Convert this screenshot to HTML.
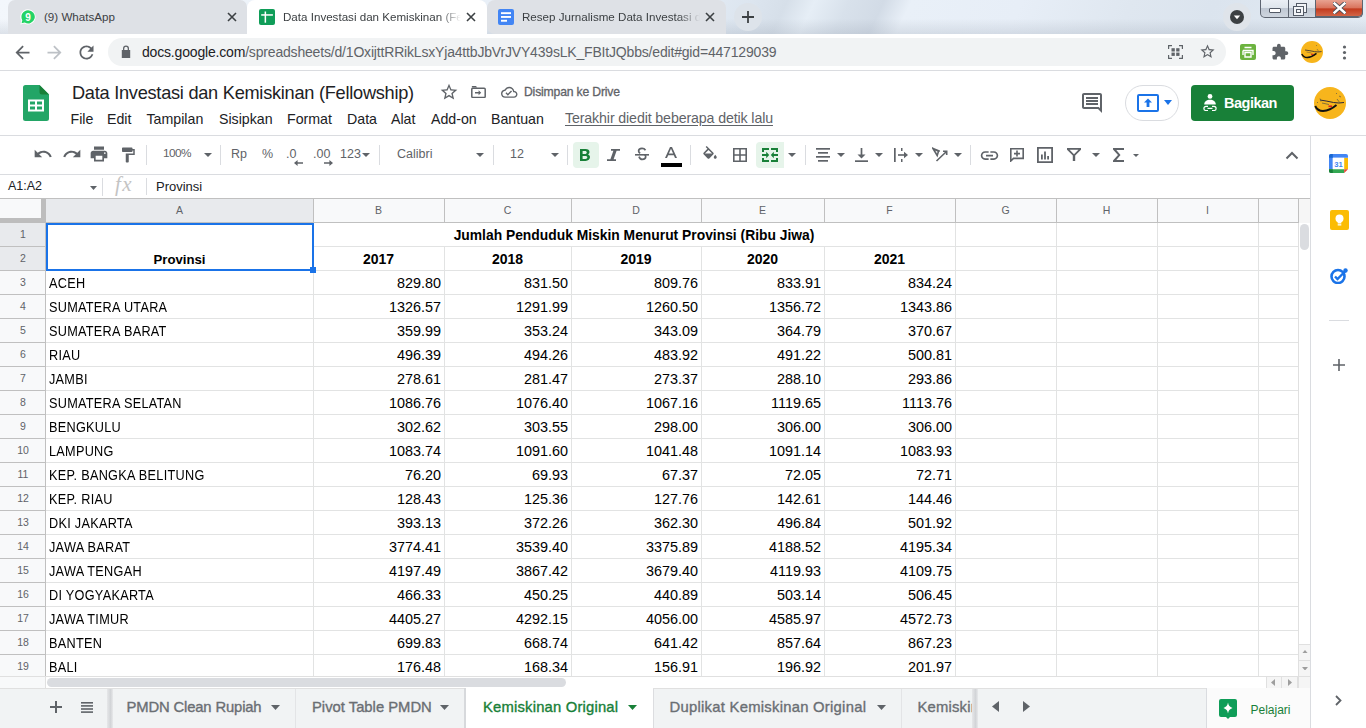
<!DOCTYPE html><html><head><meta charset="utf-8"><style>html,body{margin:0;padding:0;}body{width:1366px;height:728px;overflow:hidden;position:relative;background:#fff;font-family:"Liberation Sans",sans-serif;}div,svg{box-sizing:border-box;}</style></head><body>
<div style="position:absolute;left:0px;top:0px;width:1366px;height:34px;background:linear-gradient(180deg,rgba(255,255,255,0) 55%,rgba(140,150,165,0.22) 100%),linear-gradient(115deg,#f3f7fc 0%,#e4ecf5 50%,#dce5ef 54.5%,#d6dfe9 57%,#e6eef6 59%,#d8e1eb 61.5%,#d2dbe6 64%,#e9f0f8 66%,#e7eef7 74%,#dfe7f0 82%,#dbe4ee 88%,#e3ebf4 100%);"></div>
<div style="position:absolute;left:8px;top:0px;width:239px;height:34px;background:#dee1e6;border-radius:7px 7px 0 0;"></div>
<div style="position:absolute;left:247px;top:0px;width:240px;height:34px;background:#fff;border-radius:8px 8px 0 0;"></div>
<div style="position:absolute;left:487px;top:0px;width:239px;height:34px;background:#dee1e6;border-radius:8px 8px 0 8px;"></div>
<svg style="position:absolute;left:20px;top:9px;" width="16" height="16" viewBox="0 0 16 16"><path fill="#fff" d="M8 0.3a7.6 7.6 0 0 0-6.6 11.4L0.4 15.6l4-1A7.6 7.6 0 1 0 8 0.3z"/><path fill="#25d366" d="M8 1.3a6.6 6.6 0 0 0-5.7 9.9L1.6 14.3l3.1-.8A6.6 6.6 0 1 0 8 1.3z"/><text x="8" y="11.6" font-family="Liberation Sans" font-weight="bold" font-size="10" fill="#fff" text-anchor="middle">9</text></svg>
<div style="position:absolute;left:44px;top:11.18px;font-size:11.6px;line-height:11.6px;color:#3c4043;font-weight:normal;white-space:nowrap;">(9) WhatsApp</div>
<svg style="position:absolute;left:226px;top:11px;" width="12" height="12" viewBox="0 0 12 12"><path stroke="#3c4043" stroke-width="1.6" d="M2 2L10 10M10 2L2 10"/></svg>
<svg style="position:absolute;left:259px;top:9px;" width="16" height="16" viewBox="0 0 16 16"><rect x="0" y="0" width="16" height="16" rx="2" fill="#0f9d58"/><rect x="2.2" y="5.2" width="11.7" height="1.5" fill="#fff"/><rect x="5.6" y="2.5" width="1.5" height="11.2" fill="#fff"/></svg>
<div style="position:absolute;left:283px;top:11.18px;font-size:11.6px;line-height:11.6px;color:#3c4043;font-weight:normal;white-space:nowrap;width:178px;overflow:hidden;-webkit-mask-image:linear-gradient(90deg,#000 0,#000 156px,transparent 178px);">Data Investasi dan Kemiskinan (Fellowship)</div>
<svg style="position:absolute;left:465px;top:11px;" width="12" height="12" viewBox="0 0 12 12"><path stroke="#3c4043" stroke-width="1.6" d="M2 2L10 10M10 2L2 10"/></svg>
<svg style="position:absolute;left:498px;top:9px;" width="16" height="16" viewBox="0 0 16 16"><rect x="0" y="0" width="16" height="16" rx="2" fill="#4285f4"/><rect x="3" y="3.2" width="10" height="1.9" fill="#fff"/><rect x="3" y="7" width="10" height="1.9" fill="#fff"/><rect x="3" y="10.8" width="6" height="1.9" fill="#fff"/></svg>
<div style="position:absolute;left:522px;top:11.18px;font-size:11.6px;line-height:11.6px;color:#3c4043;font-weight:normal;white-space:nowrap;width:178px;overflow:hidden;-webkit-mask-image:linear-gradient(90deg,#000 0,#000 156px,transparent 178px);">Resep Jurnalisme Data Investasi dan Kemiskinan</div>
<svg style="position:absolute;left:704px;top:11px;" width="12" height="12" viewBox="0 0 12 12"><path stroke="#3c4043" stroke-width="1.6" d="M2 2L10 10M10 2L2 10"/></svg>
<div style="position:absolute;left:734px;top:3px;width:28px;height:28px;background:#dde3ea;border-radius:50%;"></div>
<svg style="position:absolute;left:741px;top:10px;" width="14" height="14" viewBox="0 0 14 14"><path stroke="#3c4043" stroke-width="1.8" d="M7 1V13M1 7H13"/></svg>
<div style="position:absolute;left:1223px;top:3px;width:28px;height:28px;background:#dfe4ea;border-radius:50%;"></div>
<svg style="position:absolute;left:1230px;top:10px;" width="14" height="14" viewBox="0 0 14 14"><circle cx="7" cy="7" r="7" fill="#3c4043"/><path fill="#fff" d="M3.8 5.6h6.4L7 9.2z"/></svg>
<div style="position:absolute;left:1260px;top:-2px;width:103px;height:20px;border:1px solid #5d6470;border-top:none;border-radius:0 0 5px 5px;background:linear-gradient(#eef2f7 0%,#dfe5ec 50%,#bfc7d2 55%,#cfd6df 100%);overflow:hidden;"></div>
<div style="position:absolute;left:1288px;top:0px;width:1px;height:17px;background:#5d6470;"></div>
<div style="position:absolute;left:1315px;top:0px;width:48px;height:17px;background:linear-gradient(#e8a291 0%,#d9735c 50%,#c23a1e 55%,#d26547 100%);border-radius:0 0 5px 0;border-left:1px solid #5d6470;border-bottom:1px solid #5d6470;border-right:1px solid #5d6470;"></div>
<div style="position:absolute;left:1269px;top:8px;width:12px;height:5px;background:#fff;border:1px solid #535a66;border-radius:1px;"></div>
<div style="position:absolute;left:1296px;top:3px;width:11px;height:10px;border:1px solid #535a66;background:#f3f5f8;"></div>
<div style="position:absolute;left:1293px;top:6px;width:11px;height:10px;border:1px solid #535a66;background:#f3f5f8;"></div>
<div style="position:absolute;left:1296px;top:9px;width:5px;height:4px;border:1px solid #535a66;"></div>
<svg style="position:absolute;left:1333px;top:2px;" width="13" height="12" viewBox="0 0 13 12"><path d="M1.5 1.5L11.5 10.5M11.5 1.5L1.5 10.5" stroke="#4a4f58" stroke-width="4.2" stroke-linecap="square"/><path d="M1.5 1.5L11.5 10.5M11.5 1.5L1.5 10.5" stroke="#fff" stroke-width="2.4" stroke-linecap="square"/></svg>
<div style="position:absolute;left:0px;top:34px;width:1366px;height:36px;background:#fff;"></div>
<svg style="position:absolute;left:11.5px;top:41.5px;" width="21" height="21" viewBox="0 0 24 24"><path fill="#5f6368" d="M20 11H7.83l5.59-5.59L12 4l-8 8 8 8 1.41-1.41L7.83 13H20v-2z"/></svg>
<svg style="position:absolute;left:43.5px;top:41.5px;" width="21" height="21" viewBox="0 0 24 24"><path fill="#bdc1c6" d="M12 4l-1.41 1.41L16.17 11H4v2h12.17l-5.58 5.59L12 20l8-8z"/></svg>
<svg style="position:absolute;left:75.5px;top:41.5px;" width="21" height="21" viewBox="0 0 24 24"><path fill="#5f6368" d="M17.65 6.35C16.2 4.9 14.21 4 12 4c-4.42 0-7.99 3.58-7.99 8s3.57 8 7.99 8c3.73 0 6.84-2.55 7.73-6h-2.08c-.82 2.33-3.04 4-5.65 4-3.31 0-6-2.69-6-6s2.69-6 6-6c1.66 0 3.14.69 4.22 1.78L13 11h7V4l-2.35 2.35z"/></svg>
<div style="position:absolute;left:108px;top:38px;width:1118px;height:28px;background:#f1f3f4;border-radius:14px;"></div>
<svg style="position:absolute;left:121px;top:45px;" width="10" height="13" viewBox="0 0 10 13"><path fill="#5f6368" d="M2 5V3.5a3 3 0 0 1 6 0V5h1.2v8H0.8V5zM3.3 5h3.4V3.5a1.7 1.7 0 0 0-3.4 0z"/></svg>
<div style="position:absolute;left:142px;top:45.15px;font-size:14px;line-height:14px;color:#202124;font-weight:normal;white-space:nowrap;"><span style="letter-spacing:-0.18px">docs.google.com<span style="color:#5f6368">/spreadsheets/d/1OxijttRRikLsxYja4ttbJbVrJVY439sLK_FBItJQbbs/edit#gid=447129039</span></span></div>
<svg style="position:absolute;left:1168px;top:45px;" width="15" height="14" viewBox="0 0 15 14"><g fill="none" stroke="#5f6368" stroke-width="1.2"><path d="M0.6 4V0.6H4M11 0.6H14.4V4M14.4 10V13.4H11M4 13.4H0.6V10"/></g><g fill="#5f6368"><rect x="3.5" y="3.2" width="3.3" height="3.3"/><rect x="8.2" y="3.2" width="3.3" height="3.3"/><rect x="3.5" y="7.6" width="3.3" height="3.3"/><rect x="8.2" y="7.6" width="3.3" height="3.3"/></g></svg>
<svg style="position:absolute;left:1199px;top:43px;" width="17" height="17" viewBox="0 0 24 24"><path fill="#5f6368" d="M22 9.24l-7.19-.62L12 2 9.19 8.63 2 9.24l5.46 4.73L5.82 21 12 17.27 18.18 21l-1.63-7.03L22 9.24zM12 15.4l-3.76 2.27 1-4.28-3.32-2.88 4.38-.38L12 6.1l1.71 4.04 4.38.38-3.32 2.88 1 4.28L12 15.4z"/></svg>
<svg style="position:absolute;left:1240px;top:44px;" width="16" height="16" viewBox="0 0 16 16"><rect width="16" height="16" rx="2" fill="#6cb33f"/><path fill="none" stroke="#fff" stroke-width="1.4" d="M4.5 3.5h7M3 6.5h10v4.5M3 6.5v4.5M5 8.5h6v4.5H5z"/></svg>
<svg style="position:absolute;left:1271px;top:43px;" width="18" height="18" viewBox="0 0 24 24"><path fill="#5f6368" d="M20.5 11H19V7c0-1.1-.9-2-2-2h-4V3.5C13 2.12 11.88 1 10.5 1S8 2.12 8 3.5V5H4c-1.1 0-1.99.9-1.99 2v3.8H3.5c1.49 0 2.7 1.21 2.7 2.7s-1.21 2.7-2.7 2.7H2V20c0 1.1.9 2 2 2h3.8v-1.5c0-1.49 1.21-2.7 2.7-2.7 1.49 0 2.7 1.21 2.7 2.7V22H17c1.1 0 2-.9 2-2v-4h1.5c1.38 0 2.5-1.12 2.5-2.5S21.88 11 20.5 11z"/></svg>
<svg style="position:absolute;left:1301px;top:41px;" width="22" height="22" viewBox="0 0 22 22"><circle cx="11" cy="11" r="11" fill="#f7b51c"/><path d="M0.8 13Q2.4 16.5 6.2 16.5Q11 16.2 15.5 12.4" stroke="#111" stroke-width="1.4" fill="none"/><path d="M4 9Q9 9.6 13.4 10.6Q17 11.3 20.6 10.6" stroke="#2b2b3a" stroke-width="0.8" fill="none"/><path d="M5.5 11l5 1M16 8l2 3M15 4l1 1" stroke="#6b6040" stroke-width="0.6" fill="none"/><rect x="10" y="12.7" width="2.4" height="1.1" fill="#d61f1f"/></svg>
<svg style="position:absolute;left:1342px;top:45px;" width="5" height="15" viewBox="0 0 5 15"><circle cx="2.5" cy="2" r="1.6" fill="#5f6368"/><circle cx="2.5" cy="7.5" r="1.6" fill="#5f6368"/><circle cx="2.5" cy="13" r="1.6" fill="#5f6368"/></svg>
<div style="position:absolute;left:0px;top:70px;width:1366px;height:1px;background:#dadce0;"></div>
<svg style="position:absolute;left:23px;top:85px;" width="26" height="36" viewBox="0 0 26 36"><path fill="#23a566" d="M16.5 0H2.5A2.5 2.5 0 0 0 0 2.5v31A2.5 2.5 0 0 0 2.5 36h21a2.5 2.5 0 0 0 2.5-2.5V9.5z"/><path fill="#188038" d="M16.5 0v7a2.5 2.5 0 0 0 2.5 2.5h7z"/><path fill="#fff" d="M5 14.5h16v12H5zM7 16.5v3h5v-3zm7 0v3h5v-3zm-7 5v3h5v-3zm7 0v3h5v-3z"/></svg>
<div style="position:absolute;left:72px;top:83.59px;font-size:18.2px;line-height:18.2px;color:#202124;font-weight:normal;white-space:nowrap;letter-spacing:-0.26px;">Data Investasi dan Kemiskinan (Fellowship)</div>
<svg style="position:absolute;left:439px;top:82px;" width="20" height="20" viewBox="0 0 24 24"><path fill="#5f6368" d="M22 9.24l-7.19-.62L12 2 9.19 8.63 2 9.24l5.46 4.73L5.82 21 12 17.27 18.18 21l-1.63-7.03L22 9.24zM12 15.4l-3.76 2.27 1-4.28-3.32-2.88 4.38-.38L12 6.1l1.71 4.04 4.38.38-3.32 2.88 1 4.28L12 15.4z"/></svg>
<svg style="position:absolute;left:471px;top:86px;" width="15" height="12" viewBox="0 0 15 12"><path fill="none" stroke="#5f6368" stroke-width="1.5" d="M1.8 2.3h11.4a1 1 0 0 1 1 1v7.1a1 1 0 0 1-1 1H1.8a1 1 0 0 1-1-1V3.3a1 1 0 0 1 1-1z"/><path fill="#5f6368" d="M0.8 0.5a.5.5 0 0 1 .5-.5H5l1.2 1.5H.8z"/><path fill="#5f6368" d="M4 6.1h3.6V4.3l2.6 2.5-2.6 2.5V7.5H4z"/></svg>
<svg style="position:absolute;left:501px;top:84px;" width="16.5" height="16.5" viewBox="0 0 24 24"><path fill="#5f6368" d="M19.35 10.04C18.67 6.59 15.64 4 12 4 9.11 4 6.6 5.64 5.35 8.04 2.34 8.36 0 10.91 0 14c0 3.31 2.69 6 6 6h13c2.76 0 5-2.24 5-5 0-2.64-2.05-4.78-4.65-4.96zM19 18H6c-2.21 0-4-1.79-4-4 0-2.05 1.53-3.76 3.56-3.97l1.07-.11.5-.95C8.08 7.14 9.94 6 12 6c2.62 0 4.88 1.86 5.39 4.43l.3 1.5 1.53.11c1.56.1 2.78 1.41 2.78 2.96 0 1.65-1.35 3-3 3zm-9-3.82l-2.09-2.09L6.5 13.5 10 17l6.01-6.01-1.41-1.41z"/></svg>
<div style="position:absolute;left:524px;top:85.67px;font-size:12.2px;line-height:12.2px;color:#5f6368;font-weight:normal;white-space:nowrap;letter-spacing:-0.18px;-webkit-text-stroke:0.3px #5f6368;">Disimpan ke Drive</div>
<div style="position:absolute;left:70.5px;top:111.98px;font-size:14.2px;line-height:14.2px;color:#202124;font-weight:normal;white-space:nowrap;">File</div>
<div style="position:absolute;left:107px;top:111.98px;font-size:14.2px;line-height:14.2px;color:#202124;font-weight:normal;white-space:nowrap;">Edit</div>
<div style="position:absolute;left:146.5px;top:111.98px;font-size:14.2px;line-height:14.2px;color:#202124;font-weight:normal;white-space:nowrap;">Tampilan</div>
<div style="position:absolute;left:219px;top:111.98px;font-size:14.2px;line-height:14.2px;color:#202124;font-weight:normal;white-space:nowrap;">Sisipkan</div>
<div style="position:absolute;left:287px;top:111.98px;font-size:14.2px;line-height:14.2px;color:#202124;font-weight:normal;white-space:nowrap;">Format</div>
<div style="position:absolute;left:347px;top:111.98px;font-size:14.2px;line-height:14.2px;color:#202124;font-weight:normal;white-space:nowrap;">Data</div>
<div style="position:absolute;left:391px;top:111.98px;font-size:14.2px;line-height:14.2px;color:#202124;font-weight:normal;white-space:nowrap;">Alat</div>
<div style="position:absolute;left:431px;top:111.98px;font-size:14.2px;line-height:14.2px;color:#202124;font-weight:normal;white-space:nowrap;">Add-on</div>
<div style="position:absolute;left:491px;top:111.98px;font-size:14.2px;line-height:14.2px;color:#202124;font-weight:normal;white-space:nowrap;">Bantuan</div>
<div style="position:absolute;left:565px;top:110.98px;font-size:14.2px;line-height:14.2px;color:#5f6368;font-weight:normal;white-space:nowrap;letter-spacing:-0.12px;text-decoration:underline;text-underline-offset:2px;">Terakhir diedit beberapa detik lalu</div>
<svg style="position:absolute;left:1080px;top:91px;" width="24" height="24" viewBox="0 0 24 24"><path fill="#5f6368" d="M21.99 4c0-1.1-.89-2-1.99-2H4c-1.1 0-2 .9-2 2v12c0 1.1.9 2 2 2h14l4 4-.01-18zM20 4v13.17L18.83 16H4V4h16zM6 12h12v2H6zm0-3h12v2H6zm0-3h12v2H6z"/></svg>
<div style="position:absolute;left:1125px;top:85px;width:54px;height:36px;border:1px solid #dadce0;border-radius:18px;background:#fff;"></div>
<svg style="position:absolute;left:1137px;top:94px;" width="22" height="18" viewBox="0 0 22 18"><rect x="1" y="1" width="20" height="16" rx="1" fill="none" stroke="#1a73e8" stroke-width="2"/><path fill="#1a73e8" d="M11 4.5l4 4h-2.6v4.5h-2.8V8.5H7z"/></svg>
<svg style="position:absolute;left:1164px;top:100px;" width="8" height="5" viewBox="0 0 8 5"><path fill="#1a73e8" d="M0 0h8L4 5z"/></svg>
<div style="position:absolute;left:1191px;top:85px;width:103px;height:36px;background:#188038;border-radius:4px;"></div>
<svg style="position:absolute;left:1203px;top:94px;" width="14" height="17" viewBox="0 0 14 17"><circle cx="7" cy="2.4" r="2.4" fill="#fff"/><path fill="#fff" d="M1.2 10.6c0-3.2 2.6-4.8 5.8-4.8s5.8 1.6 5.8 4.8z"/><path fill="none" stroke="#fff" stroke-width="1.2" d="M5 12.3H3a2.1 2.1 0 0 0 0 4.2h2M9 12.3h2a2.1 2.1 0 0 1 0 4.2H9M4.5 14.4h5"/></svg>
<div style="position:absolute;left:1224px;top:95.73px;font-size:14.5px;line-height:14.5px;color:#fff;font-weight:bold;white-space:nowrap;letter-spacing:-0.5px;">Bagikan</div>
<svg style="position:absolute;left:1314px;top:87px;" width="32" height="32" viewBox="0 0 32 32"><circle cx="16" cy="16" r="16" fill="#f7b51c"/><path d="M1.2 19Q3.5 24 9 24Q16 23.5 22.5 18" stroke="#111" stroke-width="1.9" fill="none"/><path d="M6 13Q13 14 19.5 15.5Q25 16.5 30 15.5" stroke="#2b2b3a" stroke-width="1" fill="none"/><path d="M6 11.5l1 3M8 16l7 1.5M23 12l3 4M22 6l1 1M25 9l2 1M3 15l1 1" stroke="#6b6040" stroke-width="0.8" fill="none"/><rect x="14.5" y="18.5" width="3.5" height="1.6" fill="#d61f1f"/></svg>
<div style="position:absolute;left:0px;top:135px;width:1366px;height:1px;background:#dadce0;"></div>
<svg style="position:absolute;left:33px;top:144px;" width="20" height="20" viewBox="0 0 24 24"><path fill="#5f6368" d="M12.5 8c-2.65 0-5.05.99-6.9 2.6L2 7v9h9l-3.62-3.62c1.39-1.16 3.16-1.88 5.12-1.88 3.54 0 6.55 2.31 7.6 5.5l2.37-.78C21.08 11.03 17.15 8 12.5 8z"/></svg>
<svg style="position:absolute;left:62px;top:144px;" width="20" height="20" viewBox="0 0 24 24"><path fill="#5f6368" d="M18.4 10.6C16.55 8.99 14.15 8 11.5 8c-4.65 0-8.58 3.03-9.96 7.22L3.9 16c1.05-3.19 4.05-5.5 7.6-5.5 1.95 0 3.73.72 5.12 1.88L13 16h9V7l-3.6 3.6z"/></svg>
<svg style="position:absolute;left:89px;top:144px;" width="20" height="20" viewBox="0 0 24 24"><path fill="#5f6368" d="M19 8H5c-1.66 0-3 1.34-3 3v6h4v4h12v-4h4v-6c0-1.66-1.34-3-3-3zm-3 11H8v-5h8v5zm3-7c-.55 0-1-.45-1-1s.45-1 1-1 1 .45 1 1-.45 1-1 1zm-1-9H6v4h12V3z"/></svg>
<svg style="position:absolute;left:119px;top:146px;" width="18" height="18" viewBox="0 0 24 24"><path fill="#5f6368" d="M18 4V3c0-.55-.45-1-1-1H5c-.55 0-1 .45-1 1v4c0 .55.45 1 1 1h12c.55 0 1-.45 1-1V6h1v4H9v11c0 .55.45 1 1 1h2c.55 0 1-.45 1-1v-9h8V4h-3z"/></svg>
<div style="position:absolute;left:146px;top:145px;width:1px;height:20px;background:#dadce0;"></div>
<div style="position:absolute;left:163px;top:148.01px;font-size:11.8px;line-height:11.8px;color:#5f6368;font-weight:normal;white-space:nowrap;letter-spacing:-0.55px;">100%</div>
<svg style="position:absolute;left:204px;top:153px;" width="8" height="4" viewBox="0 0 8 4"><path fill="#5f6368" d="M0 0h8L4 4z"/></svg>
<div style="position:absolute;left:220px;top:145px;width:1px;height:20px;background:#dadce0;"></div>
<div style="position:absolute;left:231px;top:148.42px;font-size:12.5px;line-height:12.5px;color:#5f6368;font-weight:normal;white-space:nowrap;">Rp</div>
<div style="position:absolute;left:262px;top:148.42px;font-size:12.5px;line-height:12.5px;color:#5f6368;font-weight:normal;white-space:nowrap;">%</div>
<div style="position:absolute;left:286px;top:148.42px;font-size:12.5px;line-height:12.5px;color:#5f6368;font-weight:normal;white-space:nowrap;">.0</div>
<svg style="position:absolute;left:294px;top:159.5px;" width="9" height="6" viewBox="0 0 9 6"><path fill="#5f6368" d="M0 3L3.6 0v2.2H9v1.6H3.6V6z"/></svg>
<div style="position:absolute;left:313px;top:148.42px;font-size:12.5px;line-height:12.5px;color:#5f6368;font-weight:normal;white-space:nowrap;">.00</div>
<svg style="position:absolute;left:324px;top:159.5px;" width="9" height="6" viewBox="0 0 9 6"><path fill="#5f6368" d="M9 3L5.4 0v2.2H0v1.6h5.4V6z"/></svg>
<div style="position:absolute;left:340px;top:148.42px;font-size:12.5px;line-height:12.5px;color:#5f6368;font-weight:normal;white-space:nowrap;">123</div>
<svg style="position:absolute;left:362px;top:153px;" width="8" height="4" viewBox="0 0 8 4"><path fill="#5f6368" d="M0 0h8L4 4z"/></svg>
<div style="position:absolute;left:379px;top:145px;width:1px;height:20px;background:#dadce0;"></div>
<div style="position:absolute;left:397px;top:148.42px;font-size:12.5px;line-height:12.5px;color:#5f6368;font-weight:normal;white-space:nowrap;">Calibri</div>
<svg style="position:absolute;left:476px;top:153px;" width="8" height="4" viewBox="0 0 8 4"><path fill="#5f6368" d="M0 0h8L4 4z"/></svg>
<div style="position:absolute;left:493px;top:145px;width:1px;height:20px;background:#dadce0;"></div>
<div style="position:absolute;left:510px;top:148.42px;font-size:12.5px;line-height:12.5px;color:#5f6368;font-weight:normal;white-space:nowrap;">12</div>
<svg style="position:absolute;left:551px;top:153px;" width="8" height="4" viewBox="0 0 8 4"><path fill="#5f6368" d="M0 0h8L4 4z"/></svg>
<div style="position:absolute;left:567px;top:145px;width:1px;height:20px;background:#dadce0;"></div>
<div style="position:absolute;left:573px;top:142px;width:26px;height:26px;background:#e6f4ea;border-radius:4px;"></div>
<svg style="position:absolute;left:580px;top:149px;" width="11" height="12" viewBox="0 0 11 12"><path fill="#188038" d="M0 0h5.5c2.6 0 4 1.2 4 3 0 1.2-.7 2-1.6 2.4 1.3.3 2.1 1.3 2.1 2.7 0 2.3-1.7 3.9-4.4 3.9H0zM2.6 2.1v3H5c1.1 0 1.8-.6 1.8-1.5S6.1 2.1 5 2.1zm0 5v2.8h2.8c1.2 0 1.9-.6 1.9-1.4s-.7-1.4-1.9-1.4z"/></svg>
<svg style="position:absolute;left:607px;top:149px;" width="13" height="12" viewBox="0 0 13 12"><path fill="#5f6368" d="M4 0h9v1.8h-3.4L6.6 10.2H9V12H0v-1.8h3.4L6.4 1.8H4z"/></svg>
<svg style="position:absolute;left:635px;top:147px;" width="14" height="15" viewBox="0 0 14 15"><path fill="none" stroke="#5f6368" stroke-width="1.7" d="M10.5 3.2C9.8 2 8.6 1.3 7 1.3 5 1.3 3.6 2.4 3.6 4c0 1 .6 1.8 1.6 2.3M4 9.6c.6 1.6 1.8 2.8 3.3 2.8 2 0 3.4-1 3.4-2.6 0-.9-.4-1.6-1.1-2"/><rect x="0" y="7" width="14" height="1.6" fill="#5f6368"/></svg>
<svg style="position:absolute;left:665px;top:147px;" width="12" height="11" viewBox="0 0 12 11"><path fill="#5f6368" d="M5 0h2l5 11h-2l-1.2-2.8H3.2L2 11H0zM3.9 6.5h4.2L6 1.7z"/></svg>
<div style="position:absolute;left:661px;top:163px;width:21px;height:4px;background:#000;"></div>
<div style="position:absolute;left:690px;top:145px;width:1px;height:20px;background:#dadce0;"></div>
<svg style="position:absolute;left:701px;top:146px;" width="18" height="18" viewBox="0 0 24 24"><path fill="#5f6368" d="M16.56 8.94L7.62 0 6.21 1.41l2.38 2.38-5.15 5.15c-.59.59-.59 1.54 0 2.12l5.5 5.5c.29.29.68.44 1.06.44s.77-.15 1.06-.44l5.5-5.5c.59-.58.59-1.53 0-2.12zM5.21 10L10 5.21 14.79 10H5.21zM19 11.5s-2 2.17-2 3.5c0 1.1.9 2 2 2s2-.9 2-2c0-1.33-2-3.5-2-3.5z"/></svg>
<svg style="position:absolute;left:733px;top:148px;" width="14" height="14" viewBox="0 0 14 14"><path fill="#5f6368" d="M0 0v14h14V0zm6.2 12.4H1.6V7.8h4.6zm0-6.2H1.6V1.6h4.6zm6.2 6.2H7.8V7.8h4.6zm0-6.2H7.8V1.6h4.6z"/></svg>
<div style="position:absolute;left:756px;top:142px;width:28px;height:26px;background:#e6f4ea;border-radius:4px 0 0 4px;"></div>
<svg style="position:absolute;left:762px;top:148px;" width="16" height="14" viewBox="0 0 16 14"><g fill="#188038"><path d="M0 0h7v2H2v2H0zM16 0H9v2h5v2h2zM0 14h7v-2H2v-2H0zM16 14H9v-2h5v-2h2z"/><path d="M0 6h4.2V3.8L7.2 7l-3 3.2V8H0z"/><path d="M16 6h-4.2V3.8L8.8 7l3 3.2V8H16z"/></g></svg>
<svg style="position:absolute;left:788px;top:153px;" width="8" height="4" viewBox="0 0 8 4"><path fill="#5f6368" d="M0 0h8L4 4z"/></svg>
<div style="position:absolute;left:805px;top:145px;width:1px;height:20px;background:#dadce0;"></div>
<svg style="position:absolute;left:816px;top:148px;" width="14" height="14" viewBox="0 0 14 14"><g fill="#5f6368"><rect x="0" y="0" width="14" height="1.7"/><rect x="2" y="4" width="10" height="1.7"/><rect x="0" y="8" width="14" height="1.7"/><rect x="2" y="12" width="10" height="1.7"/></g></svg>
<svg style="position:absolute;left:837px;top:153px;" width="8" height="4" viewBox="0 0 8 4"><path fill="#5f6368" d="M0 0h8L4 4z"/></svg>
<svg style="position:absolute;left:855px;top:148px;" width="13" height="14" viewBox="0 0 13 14"><g fill="#5f6368"><rect x="0" y="12.3" width="13" height="1.7"/><rect x="5.65" y="0" width="1.7" height="8"/><path d="M2.5 6.5h8L6.5 10.5z"/></g></svg>
<svg style="position:absolute;left:875px;top:153px;" width="8" height="4" viewBox="0 0 8 4"><path fill="#5f6368" d="M0 0h8L4 4z"/></svg>
<svg style="position:absolute;left:894px;top:148px;" width="14" height="14" viewBox="0 0 14 14"><g fill="#5f6368"><rect x="0" y="0" width="1.7" height="14"/><rect x="7" y="0" width="1.5" height="3"/><rect x="7" y="11" width="1.5" height="3"/><rect x="4" y="6.2" width="7" height="1.6"/><path d="M10 3.8L14 7l-4 3.2z"/></g></svg>
<svg style="position:absolute;left:915px;top:153px;" width="8" height="4" viewBox="0 0 8 4"><path fill="#5f6368" d="M0 0h8L4 4z"/></svg>
<svg style="position:absolute;left:932px;top:147px;" width="16" height="15" viewBox="0 0 16 15"><g fill="none" stroke="#5f6368" stroke-width="1.6"><path d="M1 1.5l4.2 7 1.3-4.3zM1 1.5l6.8 2.8"/><path d="M4.5 14L14.5 4.5M11 4.3h3.7V8"/></g></svg>
<svg style="position:absolute;left:954px;top:153px;" width="8" height="4" viewBox="0 0 8 4"><path fill="#5f6368" d="M0 0h8L4 4z"/></svg>
<div style="position:absolute;left:970px;top:145px;width:1px;height:20px;background:#dadce0;"></div>
<svg style="position:absolute;left:978.5px;top:144.7px;" width="21" height="21" viewBox="0 0 24 24"><path fill="#5f6368" d="M3.9 12c0-1.71 1.39-3.1 3.1-3.1h4V7H7c-2.76 0-5 2.24-5 5s2.24 5 5 5h4v-1.9H7c-1.71 0-3.1-1.39-3.1-3.1zM8 13h8v-2H8v2zm9-6h-4v1.9h4c1.71 0 3.1 1.39 3.1 3.1s-1.39 3.1-3.1 3.1h-4V17h4c2.76 0 5-2.24 5-5s-2.24-5-5-5z"/></svg>
<svg style="position:absolute;left:1010px;top:148px;" width="14" height="14" viewBox="0 0 14 14"><path fill="none" stroke="#5f6368" stroke-width="1.6" d="M0.8 0.8h12.4v9.6H3.5L0.8 13z"/><path fill="#5f6368" d="M6.2 2.6h1.6v2.2H10v1.6H7.8v2.2H6.2V6.4H4V4.8h2.2z"/></svg>
<svg style="position:absolute;left:1037px;top:147px;" width="16" height="16" viewBox="0 0 16 16"><path fill="#5f6368" d="M0 0h16v16H0zM1.8 1.8v12.4h12.4V1.8zM4 7.5h1.8v5H4zm3.1-3h1.8v8H7.1zm3.1 4.5H12v3.5h-1.8z"/></svg>
<svg style="position:absolute;left:1067px;top:148px;" width="14" height="13" viewBox="0 0 14 13"><path fill="#5f6368" d="M0 0h14v1.8L8.2 7.6V13H5.8V7.6L0 1.8zM2.6 1.8L7 6.2l4.4-4.4z"/></svg>
<svg style="position:absolute;left:1092px;top:153px;" width="8" height="4" viewBox="0 0 8 4"><path fill="#5f6368" d="M0 0h8L4 4z"/></svg>
<svg style="position:absolute;left:1113px;top:148px;" width="11" height="14" viewBox="0 0 11 14"><path fill="#5f6368" d="M0 0h11v2H3.3l4.2 5-4.2 5H11v2H0v-1.6L5 7 0 1.6z"/></svg>
<svg style="position:absolute;left:1133px;top:154px;" width="6" height="3" viewBox="0 0 6 3"><path fill="#5f6368" d="M0 0h6L3 3z"/></svg>
<svg style="position:absolute;left:1285px;top:150px;" width="14" height="10" viewBox="0 0 14 10"><path fill="none" stroke="#5f6368" stroke-width="2" d="M1.5 8.5L7 3l5.5 5.5"/></svg>
<div style="position:absolute;left:0px;top:174px;width:1310px;height:1px;background:#dadce0;"></div>
<div style="position:absolute;left:8px;top:180.42px;font-size:12.5px;line-height:12.5px;color:#202124;font-weight:normal;white-space:nowrap;">A1:A2</div>
<svg style="position:absolute;left:90px;top:186px;" width="7" height="4" viewBox="0 0 7 4"><path fill="#5f6368" d="M0 0h7L3.5 4z"/></svg>
<div style="position:absolute;left:102px;top:178px;width:1px;height:18px;background:#dadce0;"></div>
<svg style="position:absolute;left:112px;top:174px;" width="26" height="24" viewBox="0 0 26 24"><text x="3" y="17" font-family="Liberation Serif" font-style="italic" font-size="21" letter-spacing="1.5" fill="#c4c4c4">fx</text></svg>
<div style="position:absolute;left:146px;top:178px;width:1px;height:17px;background:#dadce0;"></div>
<div style="position:absolute;left:156px;top:180.00px;font-size:13px;line-height:13px;color:#202124;font-weight:normal;white-space:nowrap;">Provinsi</div>
<div style="position:absolute;left:0px;top:198px;width:1310px;height:1px;background:#c0c0c0;"></div>
<div style="position:absolute;left:0px;top:199px;width:1310px;height:477px;background:#fff;"></div>
<div style="position:absolute;left:46px;top:199px;width:1252px;height:23px;background:#f8f9fa;"></div>
<div style="position:absolute;left:46px;top:199px;width:267px;height:23px;background:#e8eaed;"></div>
<div style="position:absolute;left:0px;top:222px;width:45px;height:454px;background:#f8f9fa;"></div>
<div style="position:absolute;left:0px;top:223px;width:45px;height:47px;background:#e8eaed;"></div>
<div style="position:absolute;left:0px;top:199px;width:46px;height:24px;background:#bdbdbd;"></div>
<div style="position:absolute;left:0px;top:199px;width:41px;height:19px;background:#f8f9fa;"></div>
<div style="position:absolute;left:313px;top:246px;width:985px;height:1px;background:#e2e3e3;"></div>
<div style="position:absolute;left:0px;top:246px;width:46px;height:1px;background:#c0c0c0;"></div>
<div style="position:absolute;left:46px;top:270px;width:1252px;height:1px;background:#e2e3e3;"></div>
<div style="position:absolute;left:0px;top:270px;width:46px;height:1px;background:#c0c0c0;"></div>
<div style="position:absolute;left:46px;top:294px;width:1252px;height:1px;background:#e2e3e3;"></div>
<div style="position:absolute;left:0px;top:294px;width:46px;height:1px;background:#c0c0c0;"></div>
<div style="position:absolute;left:46px;top:318px;width:1252px;height:1px;background:#e2e3e3;"></div>
<div style="position:absolute;left:0px;top:318px;width:46px;height:1px;background:#c0c0c0;"></div>
<div style="position:absolute;left:46px;top:342px;width:1252px;height:1px;background:#e2e3e3;"></div>
<div style="position:absolute;left:0px;top:342px;width:46px;height:1px;background:#c0c0c0;"></div>
<div style="position:absolute;left:46px;top:366px;width:1252px;height:1px;background:#e2e3e3;"></div>
<div style="position:absolute;left:0px;top:366px;width:46px;height:1px;background:#c0c0c0;"></div>
<div style="position:absolute;left:46px;top:390px;width:1252px;height:1px;background:#e2e3e3;"></div>
<div style="position:absolute;left:0px;top:390px;width:46px;height:1px;background:#c0c0c0;"></div>
<div style="position:absolute;left:46px;top:414px;width:1252px;height:1px;background:#e2e3e3;"></div>
<div style="position:absolute;left:0px;top:414px;width:46px;height:1px;background:#c0c0c0;"></div>
<div style="position:absolute;left:46px;top:438px;width:1252px;height:1px;background:#e2e3e3;"></div>
<div style="position:absolute;left:0px;top:438px;width:46px;height:1px;background:#c0c0c0;"></div>
<div style="position:absolute;left:46px;top:462px;width:1252px;height:1px;background:#e2e3e3;"></div>
<div style="position:absolute;left:0px;top:462px;width:46px;height:1px;background:#c0c0c0;"></div>
<div style="position:absolute;left:46px;top:486px;width:1252px;height:1px;background:#e2e3e3;"></div>
<div style="position:absolute;left:0px;top:486px;width:46px;height:1px;background:#c0c0c0;"></div>
<div style="position:absolute;left:46px;top:510px;width:1252px;height:1px;background:#e2e3e3;"></div>
<div style="position:absolute;left:0px;top:510px;width:46px;height:1px;background:#c0c0c0;"></div>
<div style="position:absolute;left:46px;top:534px;width:1252px;height:1px;background:#e2e3e3;"></div>
<div style="position:absolute;left:0px;top:534px;width:46px;height:1px;background:#c0c0c0;"></div>
<div style="position:absolute;left:46px;top:558px;width:1252px;height:1px;background:#e2e3e3;"></div>
<div style="position:absolute;left:0px;top:558px;width:46px;height:1px;background:#c0c0c0;"></div>
<div style="position:absolute;left:46px;top:582px;width:1252px;height:1px;background:#e2e3e3;"></div>
<div style="position:absolute;left:0px;top:582px;width:46px;height:1px;background:#c0c0c0;"></div>
<div style="position:absolute;left:46px;top:606px;width:1252px;height:1px;background:#e2e3e3;"></div>
<div style="position:absolute;left:0px;top:606px;width:46px;height:1px;background:#c0c0c0;"></div>
<div style="position:absolute;left:46px;top:630px;width:1252px;height:1px;background:#e2e3e3;"></div>
<div style="position:absolute;left:0px;top:630px;width:46px;height:1px;background:#c0c0c0;"></div>
<div style="position:absolute;left:46px;top:654px;width:1252px;height:1px;background:#e2e3e3;"></div>
<div style="position:absolute;left:0px;top:654px;width:46px;height:1px;background:#c0c0c0;"></div>
<div style="position:absolute;left:46px;top:222px;width:1252px;height:1px;background:#c0c0c0;"></div>
<div style="position:absolute;left:313px;top:199px;width:1px;height:23px;background:#c0c0c0;"></div>
<div style="position:absolute;left:313px;top:223px;width:1px;height:453px;background:#e2e3e3;"></div>
<div style="position:absolute;left:444px;top:199px;width:1px;height:23px;background:#c0c0c0;"></div>
<div style="position:absolute;left:444px;top:247px;width:1px;height:429px;background:#e2e3e3;"></div>
<div style="position:absolute;left:571px;top:199px;width:1px;height:23px;background:#c0c0c0;"></div>
<div style="position:absolute;left:571px;top:247px;width:1px;height:429px;background:#e2e3e3;"></div>
<div style="position:absolute;left:701px;top:199px;width:1px;height:23px;background:#c0c0c0;"></div>
<div style="position:absolute;left:701px;top:247px;width:1px;height:429px;background:#e2e3e3;"></div>
<div style="position:absolute;left:824px;top:199px;width:1px;height:23px;background:#c0c0c0;"></div>
<div style="position:absolute;left:824px;top:247px;width:1px;height:429px;background:#e2e3e3;"></div>
<div style="position:absolute;left:955px;top:199px;width:1px;height:23px;background:#c0c0c0;"></div>
<div style="position:absolute;left:955px;top:223px;width:1px;height:453px;background:#e2e3e3;"></div>
<div style="position:absolute;left:1056px;top:199px;width:1px;height:23px;background:#c0c0c0;"></div>
<div style="position:absolute;left:1056px;top:223px;width:1px;height:453px;background:#e2e3e3;"></div>
<div style="position:absolute;left:1157px;top:199px;width:1px;height:23px;background:#c0c0c0;"></div>
<div style="position:absolute;left:1157px;top:223px;width:1px;height:453px;background:#e2e3e3;"></div>
<div style="position:absolute;left:1258px;top:199px;width:1px;height:23px;background:#c0c0c0;"></div>
<div style="position:absolute;left:1258px;top:223px;width:1px;height:453px;background:#e2e3e3;"></div>
<div style="position:absolute;left:1298px;top:199px;width:1px;height:23px;background:#c0c0c0;"></div>
<div style="position:absolute;left:45px;top:222px;width:1px;height:454px;background:#c0c0c0;"></div>
<div style="position:absolute;left:159.5px;top:205.11px;width:40px;text-align:center;font-size:10.5px;line-height:10.5px;color:#5f6368;font-weight:normal;white-space:nowrap;">A</div>
<div style="position:absolute;left:358.5px;top:205.11px;width:40px;text-align:center;font-size:10.5px;line-height:10.5px;color:#5f6368;font-weight:normal;white-space:nowrap;">B</div>
<div style="position:absolute;left:487.5px;top:205.11px;width:40px;text-align:center;font-size:10.5px;line-height:10.5px;color:#5f6368;font-weight:normal;white-space:nowrap;">C</div>
<div style="position:absolute;left:616.0px;top:205.11px;width:40px;text-align:center;font-size:10.5px;line-height:10.5px;color:#5f6368;font-weight:normal;white-space:nowrap;">D</div>
<div style="position:absolute;left:742.5px;top:205.11px;width:40px;text-align:center;font-size:10.5px;line-height:10.5px;color:#5f6368;font-weight:normal;white-space:nowrap;">E</div>
<div style="position:absolute;left:869.5px;top:205.11px;width:40px;text-align:center;font-size:10.5px;line-height:10.5px;color:#5f6368;font-weight:normal;white-space:nowrap;">F</div>
<div style="position:absolute;left:985.5px;top:205.11px;width:40px;text-align:center;font-size:10.5px;line-height:10.5px;color:#5f6368;font-weight:normal;white-space:nowrap;">G</div>
<div style="position:absolute;left:1086.5px;top:205.11px;width:40px;text-align:center;font-size:10.5px;line-height:10.5px;color:#5f6368;font-weight:normal;white-space:nowrap;">H</div>
<div style="position:absolute;left:1187.5px;top:205.11px;width:40px;text-align:center;font-size:10.5px;line-height:10.5px;color:#5f6368;font-weight:normal;white-space:nowrap;">I</div>
<div style="position:absolute;left:1258.0px;top:205.11px;width:40px;text-align:center;font-size:10.5px;line-height:10.5px;color:#5f6368;font-weight:normal;white-space:nowrap;"></div>
<div style="position:absolute;left:3.0px;top:228.81px;width:40px;text-align:center;font-size:10.5px;line-height:10.5px;color:#5f6368;font-weight:normal;white-space:nowrap;">1</div>
<div style="position:absolute;left:3.0px;top:252.81px;width:40px;text-align:center;font-size:10.5px;line-height:10.5px;color:#5f6368;font-weight:normal;white-space:nowrap;">2</div>
<div style="position:absolute;left:3.0px;top:276.81px;width:40px;text-align:center;font-size:10.5px;line-height:10.5px;color:#5f6368;font-weight:normal;white-space:nowrap;">3</div>
<div style="position:absolute;left:3.0px;top:300.81px;width:40px;text-align:center;font-size:10.5px;line-height:10.5px;color:#5f6368;font-weight:normal;white-space:nowrap;">4</div>
<div style="position:absolute;left:3.0px;top:324.81px;width:40px;text-align:center;font-size:10.5px;line-height:10.5px;color:#5f6368;font-weight:normal;white-space:nowrap;">5</div>
<div style="position:absolute;left:3.0px;top:348.81px;width:40px;text-align:center;font-size:10.5px;line-height:10.5px;color:#5f6368;font-weight:normal;white-space:nowrap;">6</div>
<div style="position:absolute;left:3.0px;top:372.81px;width:40px;text-align:center;font-size:10.5px;line-height:10.5px;color:#5f6368;font-weight:normal;white-space:nowrap;">7</div>
<div style="position:absolute;left:3.0px;top:396.81px;width:40px;text-align:center;font-size:10.5px;line-height:10.5px;color:#5f6368;font-weight:normal;white-space:nowrap;">8</div>
<div style="position:absolute;left:3.0px;top:420.81px;width:40px;text-align:center;font-size:10.5px;line-height:10.5px;color:#5f6368;font-weight:normal;white-space:nowrap;">9</div>
<div style="position:absolute;left:3.0px;top:444.81px;width:40px;text-align:center;font-size:10.5px;line-height:10.5px;color:#5f6368;font-weight:normal;white-space:nowrap;">10</div>
<div style="position:absolute;left:3.0px;top:468.81px;width:40px;text-align:center;font-size:10.5px;line-height:10.5px;color:#5f6368;font-weight:normal;white-space:nowrap;">11</div>
<div style="position:absolute;left:3.0px;top:492.81px;width:40px;text-align:center;font-size:10.5px;line-height:10.5px;color:#5f6368;font-weight:normal;white-space:nowrap;">12</div>
<div style="position:absolute;left:3.0px;top:516.81px;width:40px;text-align:center;font-size:10.5px;line-height:10.5px;color:#5f6368;font-weight:normal;white-space:nowrap;">13</div>
<div style="position:absolute;left:3.0px;top:540.81px;width:40px;text-align:center;font-size:10.5px;line-height:10.5px;color:#5f6368;font-weight:normal;white-space:nowrap;">14</div>
<div style="position:absolute;left:3.0px;top:564.81px;width:40px;text-align:center;font-size:10.5px;line-height:10.5px;color:#5f6368;font-weight:normal;white-space:nowrap;">15</div>
<div style="position:absolute;left:3.0px;top:588.81px;width:40px;text-align:center;font-size:10.5px;line-height:10.5px;color:#5f6368;font-weight:normal;white-space:nowrap;">16</div>
<div style="position:absolute;left:3.0px;top:612.81px;width:40px;text-align:center;font-size:10.5px;line-height:10.5px;color:#5f6368;font-weight:normal;white-space:nowrap;">17</div>
<div style="position:absolute;left:3.0px;top:636.81px;width:40px;text-align:center;font-size:10.5px;line-height:10.5px;color:#5f6368;font-weight:normal;white-space:nowrap;">18</div>
<div style="position:absolute;left:3.0px;top:660.81px;width:40px;text-align:center;font-size:10.5px;line-height:10.5px;color:#5f6368;font-weight:normal;white-space:nowrap;">19</div>
<div style="position:absolute;left:1298px;top:199px;width:12px;height:477px;background:#fff;border-left:1px solid #e0e0e0;"></div>
<div style="position:absolute;left:1298px;top:199px;width:12px;height:24px;background:#f6f6f6;border-left:1px solid #c0c0c0;"></div>
<div style="position:absolute;left:1300px;top:224px;width:9px;height:26px;background:#dadce0;border-radius:5px;"></div>
<div style="position:absolute;left:1298px;top:644px;width:12px;height:17px;background:#f5f5f5;border-top:1px solid #e0e0e0;border-left:1px solid #e0e0e0;"></div>
<div style="position:absolute;left:1298px;top:660px;width:12px;height:16px;background:#f5f5f5;border-top:1px solid #e0e0e0;border-left:1px solid #e0e0e0;"></div>
<svg style="position:absolute;left:1301.5px;top:649.5px;" width="6" height="3.5" viewBox="0 0 6 3.5"><path fill="#9e9e9e" d="M0 3.5h6L3 0z"/></svg>
<svg style="position:absolute;left:1301.5px;top:666.5px;" width="6" height="3.5" viewBox="0 0 6 3.5"><path fill="#9e9e9e" d="M0 0h6L3 3.5z"/></svg>
<div style="position:absolute;left:0;top:199px;width:1298px;height:477px;overflow:hidden;">
<div style="position:absolute;left:49px;top:78.32px;font-size:13.8px;line-height:13.8px;color:#000;font-weight:normal;white-space:nowrap;letter-spacing:0.3px;transform:scaleX(0.92);transform-origin:0 0;">ACEH</div>
<div style="position:absolute;left:321px;top:76.81px;width:120px;text-align:right;font-size:14.4px;line-height:14.4px;color:#000;font-weight:normal;white-space:nowrap;">829.80</div>
<div style="position:absolute;left:448px;top:76.81px;width:120px;text-align:right;font-size:14.4px;line-height:14.4px;color:#000;font-weight:normal;white-space:nowrap;">831.50</div>
<div style="position:absolute;left:578px;top:76.81px;width:120px;text-align:right;font-size:14.4px;line-height:14.4px;color:#000;font-weight:normal;white-space:nowrap;">809.76</div>
<div style="position:absolute;left:701px;top:76.81px;width:120px;text-align:right;font-size:14.4px;line-height:14.4px;color:#000;font-weight:normal;white-space:nowrap;">833.91</div>
<div style="position:absolute;left:832px;top:76.81px;width:120px;text-align:right;font-size:14.4px;line-height:14.4px;color:#000;font-weight:normal;white-space:nowrap;">834.24</div>
<div style="position:absolute;left:49px;top:102.32px;font-size:13.8px;line-height:13.8px;color:#000;font-weight:normal;white-space:nowrap;letter-spacing:0.3px;transform:scaleX(0.92);transform-origin:0 0;">SUMATERA UTARA</div>
<div style="position:absolute;left:321px;top:100.81px;width:120px;text-align:right;font-size:14.4px;line-height:14.4px;color:#000;font-weight:normal;white-space:nowrap;">1326.57</div>
<div style="position:absolute;left:448px;top:100.81px;width:120px;text-align:right;font-size:14.4px;line-height:14.4px;color:#000;font-weight:normal;white-space:nowrap;">1291.99</div>
<div style="position:absolute;left:578px;top:100.81px;width:120px;text-align:right;font-size:14.4px;line-height:14.4px;color:#000;font-weight:normal;white-space:nowrap;">1260.50</div>
<div style="position:absolute;left:701px;top:100.81px;width:120px;text-align:right;font-size:14.4px;line-height:14.4px;color:#000;font-weight:normal;white-space:nowrap;">1356.72</div>
<div style="position:absolute;left:832px;top:100.81px;width:120px;text-align:right;font-size:14.4px;line-height:14.4px;color:#000;font-weight:normal;white-space:nowrap;">1343.86</div>
<div style="position:absolute;left:49px;top:126.32px;font-size:13.8px;line-height:13.8px;color:#000;font-weight:normal;white-space:nowrap;letter-spacing:0.3px;transform:scaleX(0.92);transform-origin:0 0;">SUMATERA BARAT</div>
<div style="position:absolute;left:321px;top:124.81px;width:120px;text-align:right;font-size:14.4px;line-height:14.4px;color:#000;font-weight:normal;white-space:nowrap;">359.99</div>
<div style="position:absolute;left:448px;top:124.81px;width:120px;text-align:right;font-size:14.4px;line-height:14.4px;color:#000;font-weight:normal;white-space:nowrap;">353.24</div>
<div style="position:absolute;left:578px;top:124.81px;width:120px;text-align:right;font-size:14.4px;line-height:14.4px;color:#000;font-weight:normal;white-space:nowrap;">343.09</div>
<div style="position:absolute;left:701px;top:124.81px;width:120px;text-align:right;font-size:14.4px;line-height:14.4px;color:#000;font-weight:normal;white-space:nowrap;">364.79</div>
<div style="position:absolute;left:832px;top:124.81px;width:120px;text-align:right;font-size:14.4px;line-height:14.4px;color:#000;font-weight:normal;white-space:nowrap;">370.67</div>
<div style="position:absolute;left:49px;top:150.32px;font-size:13.8px;line-height:13.8px;color:#000;font-weight:normal;white-space:nowrap;letter-spacing:0.3px;transform:scaleX(0.92);transform-origin:0 0;">RIAU</div>
<div style="position:absolute;left:321px;top:148.81px;width:120px;text-align:right;font-size:14.4px;line-height:14.4px;color:#000;font-weight:normal;white-space:nowrap;">496.39</div>
<div style="position:absolute;left:448px;top:148.81px;width:120px;text-align:right;font-size:14.4px;line-height:14.4px;color:#000;font-weight:normal;white-space:nowrap;">494.26</div>
<div style="position:absolute;left:578px;top:148.81px;width:120px;text-align:right;font-size:14.4px;line-height:14.4px;color:#000;font-weight:normal;white-space:nowrap;">483.92</div>
<div style="position:absolute;left:701px;top:148.81px;width:120px;text-align:right;font-size:14.4px;line-height:14.4px;color:#000;font-weight:normal;white-space:nowrap;">491.22</div>
<div style="position:absolute;left:832px;top:148.81px;width:120px;text-align:right;font-size:14.4px;line-height:14.4px;color:#000;font-weight:normal;white-space:nowrap;">500.81</div>
<div style="position:absolute;left:49px;top:174.32px;font-size:13.8px;line-height:13.8px;color:#000;font-weight:normal;white-space:nowrap;letter-spacing:0.3px;transform:scaleX(0.92);transform-origin:0 0;">JAMBI</div>
<div style="position:absolute;left:321px;top:172.81px;width:120px;text-align:right;font-size:14.4px;line-height:14.4px;color:#000;font-weight:normal;white-space:nowrap;">278.61</div>
<div style="position:absolute;left:448px;top:172.81px;width:120px;text-align:right;font-size:14.4px;line-height:14.4px;color:#000;font-weight:normal;white-space:nowrap;">281.47</div>
<div style="position:absolute;left:578px;top:172.81px;width:120px;text-align:right;font-size:14.4px;line-height:14.4px;color:#000;font-weight:normal;white-space:nowrap;">273.37</div>
<div style="position:absolute;left:701px;top:172.81px;width:120px;text-align:right;font-size:14.4px;line-height:14.4px;color:#000;font-weight:normal;white-space:nowrap;">288.10</div>
<div style="position:absolute;left:832px;top:172.81px;width:120px;text-align:right;font-size:14.4px;line-height:14.4px;color:#000;font-weight:normal;white-space:nowrap;">293.86</div>
<div style="position:absolute;left:49px;top:198.32px;font-size:13.8px;line-height:13.8px;color:#000;font-weight:normal;white-space:nowrap;letter-spacing:0.3px;transform:scaleX(0.92);transform-origin:0 0;">SUMATERA SELATAN</div>
<div style="position:absolute;left:321px;top:196.81px;width:120px;text-align:right;font-size:14.4px;line-height:14.4px;color:#000;font-weight:normal;white-space:nowrap;">1086.76</div>
<div style="position:absolute;left:448px;top:196.81px;width:120px;text-align:right;font-size:14.4px;line-height:14.4px;color:#000;font-weight:normal;white-space:nowrap;">1076.40</div>
<div style="position:absolute;left:578px;top:196.81px;width:120px;text-align:right;font-size:14.4px;line-height:14.4px;color:#000;font-weight:normal;white-space:nowrap;">1067.16</div>
<div style="position:absolute;left:701px;top:196.81px;width:120px;text-align:right;font-size:14.4px;line-height:14.4px;color:#000;font-weight:normal;white-space:nowrap;">1119.65</div>
<div style="position:absolute;left:832px;top:196.81px;width:120px;text-align:right;font-size:14.4px;line-height:14.4px;color:#000;font-weight:normal;white-space:nowrap;">1113.76</div>
<div style="position:absolute;left:49px;top:222.32px;font-size:13.8px;line-height:13.8px;color:#000;font-weight:normal;white-space:nowrap;letter-spacing:0.3px;transform:scaleX(0.92);transform-origin:0 0;">BENGKULU</div>
<div style="position:absolute;left:321px;top:220.81px;width:120px;text-align:right;font-size:14.4px;line-height:14.4px;color:#000;font-weight:normal;white-space:nowrap;">302.62</div>
<div style="position:absolute;left:448px;top:220.81px;width:120px;text-align:right;font-size:14.4px;line-height:14.4px;color:#000;font-weight:normal;white-space:nowrap;">303.55</div>
<div style="position:absolute;left:578px;top:220.81px;width:120px;text-align:right;font-size:14.4px;line-height:14.4px;color:#000;font-weight:normal;white-space:nowrap;">298.00</div>
<div style="position:absolute;left:701px;top:220.81px;width:120px;text-align:right;font-size:14.4px;line-height:14.4px;color:#000;font-weight:normal;white-space:nowrap;">306.00</div>
<div style="position:absolute;left:832px;top:220.81px;width:120px;text-align:right;font-size:14.4px;line-height:14.4px;color:#000;font-weight:normal;white-space:nowrap;">306.00</div>
<div style="position:absolute;left:49px;top:246.32px;font-size:13.8px;line-height:13.8px;color:#000;font-weight:normal;white-space:nowrap;letter-spacing:0.3px;transform:scaleX(0.92);transform-origin:0 0;">LAMPUNG</div>
<div style="position:absolute;left:321px;top:244.81px;width:120px;text-align:right;font-size:14.4px;line-height:14.4px;color:#000;font-weight:normal;white-space:nowrap;">1083.74</div>
<div style="position:absolute;left:448px;top:244.81px;width:120px;text-align:right;font-size:14.4px;line-height:14.4px;color:#000;font-weight:normal;white-space:nowrap;">1091.60</div>
<div style="position:absolute;left:578px;top:244.81px;width:120px;text-align:right;font-size:14.4px;line-height:14.4px;color:#000;font-weight:normal;white-space:nowrap;">1041.48</div>
<div style="position:absolute;left:701px;top:244.81px;width:120px;text-align:right;font-size:14.4px;line-height:14.4px;color:#000;font-weight:normal;white-space:nowrap;">1091.14</div>
<div style="position:absolute;left:832px;top:244.81px;width:120px;text-align:right;font-size:14.4px;line-height:14.4px;color:#000;font-weight:normal;white-space:nowrap;">1083.93</div>
<div style="position:absolute;left:49px;top:270.32px;font-size:13.8px;line-height:13.8px;color:#000;font-weight:normal;white-space:nowrap;letter-spacing:0.3px;transform:scaleX(0.92);transform-origin:0 0;">KEP. BANGKA BELITUNG</div>
<div style="position:absolute;left:321px;top:268.81px;width:120px;text-align:right;font-size:14.4px;line-height:14.4px;color:#000;font-weight:normal;white-space:nowrap;">76.20</div>
<div style="position:absolute;left:448px;top:268.81px;width:120px;text-align:right;font-size:14.4px;line-height:14.4px;color:#000;font-weight:normal;white-space:nowrap;">69.93</div>
<div style="position:absolute;left:578px;top:268.81px;width:120px;text-align:right;font-size:14.4px;line-height:14.4px;color:#000;font-weight:normal;white-space:nowrap;">67.37</div>
<div style="position:absolute;left:701px;top:268.81px;width:120px;text-align:right;font-size:14.4px;line-height:14.4px;color:#000;font-weight:normal;white-space:nowrap;">72.05</div>
<div style="position:absolute;left:832px;top:268.81px;width:120px;text-align:right;font-size:14.4px;line-height:14.4px;color:#000;font-weight:normal;white-space:nowrap;">72.71</div>
<div style="position:absolute;left:49px;top:294.32px;font-size:13.8px;line-height:13.8px;color:#000;font-weight:normal;white-space:nowrap;letter-spacing:0.3px;transform:scaleX(0.92);transform-origin:0 0;">KEP. RIAU</div>
<div style="position:absolute;left:321px;top:292.81px;width:120px;text-align:right;font-size:14.4px;line-height:14.4px;color:#000;font-weight:normal;white-space:nowrap;">128.43</div>
<div style="position:absolute;left:448px;top:292.81px;width:120px;text-align:right;font-size:14.4px;line-height:14.4px;color:#000;font-weight:normal;white-space:nowrap;">125.36</div>
<div style="position:absolute;left:578px;top:292.81px;width:120px;text-align:right;font-size:14.4px;line-height:14.4px;color:#000;font-weight:normal;white-space:nowrap;">127.76</div>
<div style="position:absolute;left:701px;top:292.81px;width:120px;text-align:right;font-size:14.4px;line-height:14.4px;color:#000;font-weight:normal;white-space:nowrap;">142.61</div>
<div style="position:absolute;left:832px;top:292.81px;width:120px;text-align:right;font-size:14.4px;line-height:14.4px;color:#000;font-weight:normal;white-space:nowrap;">144.46</div>
<div style="position:absolute;left:49px;top:318.32px;font-size:13.8px;line-height:13.8px;color:#000;font-weight:normal;white-space:nowrap;letter-spacing:0.3px;transform:scaleX(0.92);transform-origin:0 0;">DKI JAKARTA</div>
<div style="position:absolute;left:321px;top:316.81px;width:120px;text-align:right;font-size:14.4px;line-height:14.4px;color:#000;font-weight:normal;white-space:nowrap;">393.13</div>
<div style="position:absolute;left:448px;top:316.81px;width:120px;text-align:right;font-size:14.4px;line-height:14.4px;color:#000;font-weight:normal;white-space:nowrap;">372.26</div>
<div style="position:absolute;left:578px;top:316.81px;width:120px;text-align:right;font-size:14.4px;line-height:14.4px;color:#000;font-weight:normal;white-space:nowrap;">362.30</div>
<div style="position:absolute;left:701px;top:316.81px;width:120px;text-align:right;font-size:14.4px;line-height:14.4px;color:#000;font-weight:normal;white-space:nowrap;">496.84</div>
<div style="position:absolute;left:832px;top:316.81px;width:120px;text-align:right;font-size:14.4px;line-height:14.4px;color:#000;font-weight:normal;white-space:nowrap;">501.92</div>
<div style="position:absolute;left:49px;top:342.32px;font-size:13.8px;line-height:13.8px;color:#000;font-weight:normal;white-space:nowrap;letter-spacing:0.3px;transform:scaleX(0.92);transform-origin:0 0;">JAWA BARAT</div>
<div style="position:absolute;left:321px;top:340.81px;width:120px;text-align:right;font-size:14.4px;line-height:14.4px;color:#000;font-weight:normal;white-space:nowrap;">3774.41</div>
<div style="position:absolute;left:448px;top:340.81px;width:120px;text-align:right;font-size:14.4px;line-height:14.4px;color:#000;font-weight:normal;white-space:nowrap;">3539.40</div>
<div style="position:absolute;left:578px;top:340.81px;width:120px;text-align:right;font-size:14.4px;line-height:14.4px;color:#000;font-weight:normal;white-space:nowrap;">3375.89</div>
<div style="position:absolute;left:701px;top:340.81px;width:120px;text-align:right;font-size:14.4px;line-height:14.4px;color:#000;font-weight:normal;white-space:nowrap;">4188.52</div>
<div style="position:absolute;left:832px;top:340.81px;width:120px;text-align:right;font-size:14.4px;line-height:14.4px;color:#000;font-weight:normal;white-space:nowrap;">4195.34</div>
<div style="position:absolute;left:49px;top:366.32px;font-size:13.8px;line-height:13.8px;color:#000;font-weight:normal;white-space:nowrap;letter-spacing:0.3px;transform:scaleX(0.92);transform-origin:0 0;">JAWA TENGAH</div>
<div style="position:absolute;left:321px;top:364.81px;width:120px;text-align:right;font-size:14.4px;line-height:14.4px;color:#000;font-weight:normal;white-space:nowrap;">4197.49</div>
<div style="position:absolute;left:448px;top:364.81px;width:120px;text-align:right;font-size:14.4px;line-height:14.4px;color:#000;font-weight:normal;white-space:nowrap;">3867.42</div>
<div style="position:absolute;left:578px;top:364.81px;width:120px;text-align:right;font-size:14.4px;line-height:14.4px;color:#000;font-weight:normal;white-space:nowrap;">3679.40</div>
<div style="position:absolute;left:701px;top:364.81px;width:120px;text-align:right;font-size:14.4px;line-height:14.4px;color:#000;font-weight:normal;white-space:nowrap;">4119.93</div>
<div style="position:absolute;left:832px;top:364.81px;width:120px;text-align:right;font-size:14.4px;line-height:14.4px;color:#000;font-weight:normal;white-space:nowrap;">4109.75</div>
<div style="position:absolute;left:49px;top:390.32px;font-size:13.8px;line-height:13.8px;color:#000;font-weight:normal;white-space:nowrap;letter-spacing:0.3px;transform:scaleX(0.92);transform-origin:0 0;">DI YOGYAKARTA</div>
<div style="position:absolute;left:321px;top:388.81px;width:120px;text-align:right;font-size:14.4px;line-height:14.4px;color:#000;font-weight:normal;white-space:nowrap;">466.33</div>
<div style="position:absolute;left:448px;top:388.81px;width:120px;text-align:right;font-size:14.4px;line-height:14.4px;color:#000;font-weight:normal;white-space:nowrap;">450.25</div>
<div style="position:absolute;left:578px;top:388.81px;width:120px;text-align:right;font-size:14.4px;line-height:14.4px;color:#000;font-weight:normal;white-space:nowrap;">440.89</div>
<div style="position:absolute;left:701px;top:388.81px;width:120px;text-align:right;font-size:14.4px;line-height:14.4px;color:#000;font-weight:normal;white-space:nowrap;">503.14</div>
<div style="position:absolute;left:832px;top:388.81px;width:120px;text-align:right;font-size:14.4px;line-height:14.4px;color:#000;font-weight:normal;white-space:nowrap;">506.45</div>
<div style="position:absolute;left:49px;top:414.32px;font-size:13.8px;line-height:13.8px;color:#000;font-weight:normal;white-space:nowrap;letter-spacing:0.3px;transform:scaleX(0.92);transform-origin:0 0;">JAWA TIMUR</div>
<div style="position:absolute;left:321px;top:412.81px;width:120px;text-align:right;font-size:14.4px;line-height:14.4px;color:#000;font-weight:normal;white-space:nowrap;">4405.27</div>
<div style="position:absolute;left:448px;top:412.81px;width:120px;text-align:right;font-size:14.4px;line-height:14.4px;color:#000;font-weight:normal;white-space:nowrap;">4292.15</div>
<div style="position:absolute;left:578px;top:412.81px;width:120px;text-align:right;font-size:14.4px;line-height:14.4px;color:#000;font-weight:normal;white-space:nowrap;">4056.00</div>
<div style="position:absolute;left:701px;top:412.81px;width:120px;text-align:right;font-size:14.4px;line-height:14.4px;color:#000;font-weight:normal;white-space:nowrap;">4585.97</div>
<div style="position:absolute;left:832px;top:412.81px;width:120px;text-align:right;font-size:14.4px;line-height:14.4px;color:#000;font-weight:normal;white-space:nowrap;">4572.73</div>
<div style="position:absolute;left:49px;top:438.32px;font-size:13.8px;line-height:13.8px;color:#000;font-weight:normal;white-space:nowrap;letter-spacing:0.3px;transform:scaleX(0.92);transform-origin:0 0;">BANTEN</div>
<div style="position:absolute;left:321px;top:436.81px;width:120px;text-align:right;font-size:14.4px;line-height:14.4px;color:#000;font-weight:normal;white-space:nowrap;">699.83</div>
<div style="position:absolute;left:448px;top:436.81px;width:120px;text-align:right;font-size:14.4px;line-height:14.4px;color:#000;font-weight:normal;white-space:nowrap;">668.74</div>
<div style="position:absolute;left:578px;top:436.81px;width:120px;text-align:right;font-size:14.4px;line-height:14.4px;color:#000;font-weight:normal;white-space:nowrap;">641.42</div>
<div style="position:absolute;left:701px;top:436.81px;width:120px;text-align:right;font-size:14.4px;line-height:14.4px;color:#000;font-weight:normal;white-space:nowrap;">857.64</div>
<div style="position:absolute;left:832px;top:436.81px;width:120px;text-align:right;font-size:14.4px;line-height:14.4px;color:#000;font-weight:normal;white-space:nowrap;">867.23</div>
<div style="position:absolute;left:49px;top:462.32px;font-size:13.8px;line-height:13.8px;color:#000;font-weight:normal;white-space:nowrap;letter-spacing:0.3px;transform:scaleX(0.92);transform-origin:0 0;">BALI</div>
<div style="position:absolute;left:321px;top:460.81px;width:120px;text-align:right;font-size:14.4px;line-height:14.4px;color:#000;font-weight:normal;white-space:nowrap;">176.48</div>
<div style="position:absolute;left:448px;top:460.81px;width:120px;text-align:right;font-size:14.4px;line-height:14.4px;color:#000;font-weight:normal;white-space:nowrap;">168.34</div>
<div style="position:absolute;left:578px;top:460.81px;width:120px;text-align:right;font-size:14.4px;line-height:14.4px;color:#000;font-weight:normal;white-space:nowrap;">156.91</div>
<div style="position:absolute;left:701px;top:460.81px;width:120px;text-align:right;font-size:14.4px;line-height:14.4px;color:#000;font-weight:normal;white-space:nowrap;">196.92</div>
<div style="position:absolute;left:832px;top:460.81px;width:120px;text-align:right;font-size:14.4px;line-height:14.4px;color:#000;font-weight:normal;white-space:nowrap;">201.97</div>
</div>
<div style="position:absolute;left:79.5px;top:252.83px;width:200px;text-align:center;font-size:13.2px;line-height:13.2px;color:#000;font-weight:bold;white-space:nowrap;">Provinsi</div>
<div style="position:absolute;left:384.0px;top:229.28px;width:500px;text-align:center;font-size:13.85px;line-height:13.85px;color:#000;font-weight:bold;white-space:nowrap;">Jumlah Penduduk Miskin Menurut Provinsi (Ribu Jiwa)</div>
<div style="position:absolute;left:338.5px;top:252.15px;width:80px;text-align:center;font-size:14px;line-height:14px;color:#000;font-weight:bold;white-space:nowrap;">2017</div>
<div style="position:absolute;left:467.5px;top:252.15px;width:80px;text-align:center;font-size:14px;line-height:14px;color:#000;font-weight:bold;white-space:nowrap;">2018</div>
<div style="position:absolute;left:596.0px;top:252.15px;width:80px;text-align:center;font-size:14px;line-height:14px;color:#000;font-weight:bold;white-space:nowrap;">2019</div>
<div style="position:absolute;left:722.5px;top:252.15px;width:80px;text-align:center;font-size:14px;line-height:14px;color:#000;font-weight:bold;white-space:nowrap;">2020</div>
<div style="position:absolute;left:849.5px;top:252.15px;width:80px;text-align:center;font-size:14px;line-height:14px;color:#000;font-weight:bold;white-space:nowrap;">2021</div>
<div style="position:absolute;left:46px;top:223px;width:268px;height:48px;border:2px solid #1a73e8;"></div>
<div style="position:absolute;left:310px;top:267px;width:6px;height:6px;background:#1a73e8;"></div>
<div style="position:absolute;left:0px;top:676px;width:1310px;height:12px;background:#fff;border-top:1px solid #e0e0e0;"></div>
<div style="position:absolute;left:0px;top:676px;width:46px;height:12px;background:#f8f9fa;border-top:1px solid #e0e0e0;border-right:1px solid #e0e0e0;"></div>
<div style="position:absolute;left:47px;top:678px;width:519px;height:9px;background:#dadce0;border-radius:5px;"></div>
<div style="position:absolute;left:1266px;top:676px;width:16px;height:12px;background:#f5f5f5;border:1px solid #e0e0e0;border-bottom:none;"></div>
<div style="position:absolute;left:1282px;top:676px;width:16px;height:12px;background:#f5f5f5;border:1px solid #e0e0e0;border-bottom:none;border-left:none;"></div>
<div style="position:absolute;left:1298px;top:676px;width:12px;height:12px;background:#f5f5f5;border-top:1px solid #e0e0e0;border-left:1px solid #e0e0e0;"></div>
<svg style="position:absolute;left:1271px;top:679px;" width="4" height="7" viewBox="0 0 4 7"><path fill="#9e9e9e" d="M4 0v7L0 3.5z"/></svg>
<svg style="position:absolute;left:1288px;top:679px;" width="4" height="7" viewBox="0 0 4 7"><path fill="#9e9e9e" d="M0 0v7l4-3.5z"/></svg>
<div style="position:absolute;left:0px;top:688px;width:1310px;height:40px;background:#f1f3f4;border-top:1px solid #e0e0e0;"></div>
<svg style="position:absolute;left:50px;top:701px;" width="12" height="12" viewBox="0 0 12 12"><path stroke="#5f6368" stroke-width="2" d="M6 0V12M0 6H12"/></svg>
<svg style="position:absolute;left:81px;top:702px;" width="12" height="11" viewBox="0 0 12 11"><g fill="#5f6368"><rect y="0" width="12" height="1.6"/><rect y="3.1" width="12" height="1.6"/><rect y="6.2" width="12" height="1.6"/><rect y="9.3" width="12" height="1.6"/></g></svg>
<div style="position:absolute;left:107px;top:689px;width:6px;height:39px;background:linear-gradient(90deg,#e6e7e9,#d2d4d7 60%,#e8e9eb);"></div>
<div style="position:absolute;left:295px;top:689px;width:1px;height:39px;background:#e3e4e6;"></div>
<div style="position:absolute;left:126.5px;top:700.47px;font-size:14.8px;line-height:14.8px;color:#6a6e73;font-weight:normal;white-space:nowrap;letter-spacing:-0.14px;-webkit-text-stroke:0.35px #6a6e73;">PMDN Clean Rupiah</div>
<svg style="position:absolute;left:271px;top:705px;" width="9" height="5" viewBox="0 0 9 5"><path fill="#5f6368" d="M0 0h9L4.5 5z"/></svg>
<div style="position:absolute;left:312px;top:700.47px;font-size:14.8px;line-height:14.8px;color:#6a6e73;font-weight:normal;white-space:nowrap;letter-spacing:0px;-webkit-text-stroke:0.35px #6a6e73;">Pivot Table PMDN</div>
<svg style="position:absolute;left:440px;top:705px;" width="9" height="5" viewBox="0 0 9 5"><path fill="#5f6368" d="M0 0h9L4.5 5z"/></svg>
<div style="position:absolute;left:464px;top:688px;width:2px;height:40px;background:#d7d9dc;"></div>
<div style="position:absolute;left:466px;top:688px;width:187px;height:40px;background:#fff;"></div>
<div style="position:absolute;left:483px;top:700.47px;font-size:14.8px;line-height:14.8px;color:#188038;font-weight:normal;white-space:nowrap;letter-spacing:0.19px;-webkit-text-stroke:0.35px #188038;">Kemiskinan Original</div>
<svg style="position:absolute;left:628px;top:705px;" width="9" height="5" viewBox="0 0 9 5"><path fill="#188038" d="M0 0h9L4.5 5z"/></svg>
<div style="position:absolute;left:653px;top:689px;width:1px;height:39px;background:#dcdde0;"></div>
<div style="position:absolute;left:669.5px;top:700.47px;font-size:14.8px;line-height:14.8px;color:#6a6e73;font-weight:normal;white-space:nowrap;letter-spacing:0.27px;-webkit-text-stroke:0.35px #6a6e73;">Duplikat Kemiskinan Original</div>
<svg style="position:absolute;left:877px;top:705px;" width="9" height="5" viewBox="0 0 9 5"><path fill="#5f6368" d="M0 0h9L4.5 5z"/></svg>
<div style="position:absolute;left:901px;top:689px;width:1px;height:39px;background:#e3e4e6;"></div>
<div style="position:absolute;left:917.5px;top:700.47px;font-size:14.8px;line-height:14.8px;color:#6a6e73;font-weight:normal;white-space:nowrap;letter-spacing:0.2px;-webkit-text-stroke:0.35px #6a6e73;width:55px;overflow:hidden;">Kemiskin</div>
<div style="position:absolute;left:972px;top:689px;width:6px;height:39px;background:linear-gradient(90deg,#e6e7e9,#d2d4d7 60%,#e8e9eb);"></div>
<svg style="position:absolute;left:992px;top:701px;" width="7" height="11" viewBox="0 0 7 11"><path fill="#5f6368" d="M7 0v11L0 5.5z"/></svg>
<svg style="position:absolute;left:1023px;top:701px;" width="7" height="11" viewBox="0 0 7 11"><path fill="#5f6368" d="M0 0v11l7-5.5z"/></svg>
<div style="position:absolute;left:1206px;top:688px;width:104px;height:40px;background:#fbfbfb;border-left:1px solid #dadce0;"></div>
<svg style="position:absolute;left:1219px;top:699px;" width="18" height="20" viewBox="0 0 18 20"><path fill="#0f9d58" d="M2 0h14a2 2 0 0 1 2 2v14a2 2 0 0 1-2 2h-5l-2 2-2-2H2a2 2 0 0 1-2-2V2a2 2 0 0 1 2-2z"/><path fill="#fff" d="M9 3.5c.5 2.8 1.7 4.5 4.5 5.5-2.8 1-4 2.7-4.5 5.5-.5-2.8-1.7-4.5-4.5-5.5 2.8-1 4-2.7 4.5-5.5z"/></svg>
<div style="position:absolute;left:1250.5px;top:703.84px;font-size:12px;line-height:12px;color:#188038;font-weight:normal;white-space:nowrap;">Pelajari</div>
<div style="position:absolute;left:1310px;top:135px;width:1px;height:593px;background:#dadce0;"></div>
<div style="position:absolute;left:1311px;top:136px;width:55px;height:592px;background:#fff;"></div>
<svg style="position:absolute;left:1329px;top:154px;" width="19" height="19" viewBox="0 0 19 19"><path fill="#4285f4" d="M2 0h13v3.8H3.8V15H0V2a2 2 0 0 1 2-2z"/><path fill="#fff" d="M3.8 3.8h11.4v11.4H3.8z"/><path fill="#1967d2" d="M0 2a2 2 0 0 1 2-2h1.8v3.8H0z"/><path fill="#34a853" d="M0 15.2h15.2V19H2a2 2 0 0 1-2-2z"/><path fill="#188038" d="M0 15.2h3.8V19H2a2 2 0 0 1-2-2z"/><path fill="#fbbc04" d="M15.2 3.8H19v11.4h-3.8z"/><path fill="#4285f4" d="M15 0h2a2 2 0 0 1 2 2v1.8h-4z"/><path fill="#ea4335" d="M15.2 15.2H19L15.2 19z"/><text x="9.5" y="12.6" font-family="Liberation Sans" font-weight="bold" font-size="7.6" fill="#4285f4" text-anchor="middle">31</text></svg>
<svg style="position:absolute;left:1330px;top:210px;" width="19" height="20" viewBox="0 0 19 20"><rect width="19" height="20" rx="2" fill="#fbbc04"/><circle cx="9.5" cy="8.5" r="4" fill="#fff"/><rect x="7.7" y="11" width="3.6" height="2.5" fill="#fff"/><rect x="7.7" y="14.2" width="3.6" height="1.3" fill="#fff"/></svg>
<svg style="position:absolute;left:1330px;top:268px;" width="18" height="16" viewBox="0 0 18 16"><circle cx="8" cy="8.5" r="6.5" fill="none" stroke="#1a73e8" stroke-width="2.6"/><path fill="none" stroke="#1a73e8" stroke-width="2.4" d="M5 8.5l2.5 2.5 8-8"/><circle cx="15.5" cy="2.5" r="2.2" fill="#1a73e8"/></svg>
<div style="position:absolute;left:1329px;top:320px;width:20px;height:1px;background:#dadce0;"></div>
<svg style="position:absolute;left:1333px;top:359px;" width="12" height="12" viewBox="0 0 12 12"><path stroke="#5f6368" stroke-width="1.6" d="M6 0V12M0 6H12"/></svg>
<svg style="position:absolute;left:1335px;top:695px;" width="7" height="11" viewBox="0 0 7 11"><path fill="none" stroke="#5f6368" stroke-width="1.8" d="M1 1l4.5 4.5L1 10"/></svg>
</body></html>
